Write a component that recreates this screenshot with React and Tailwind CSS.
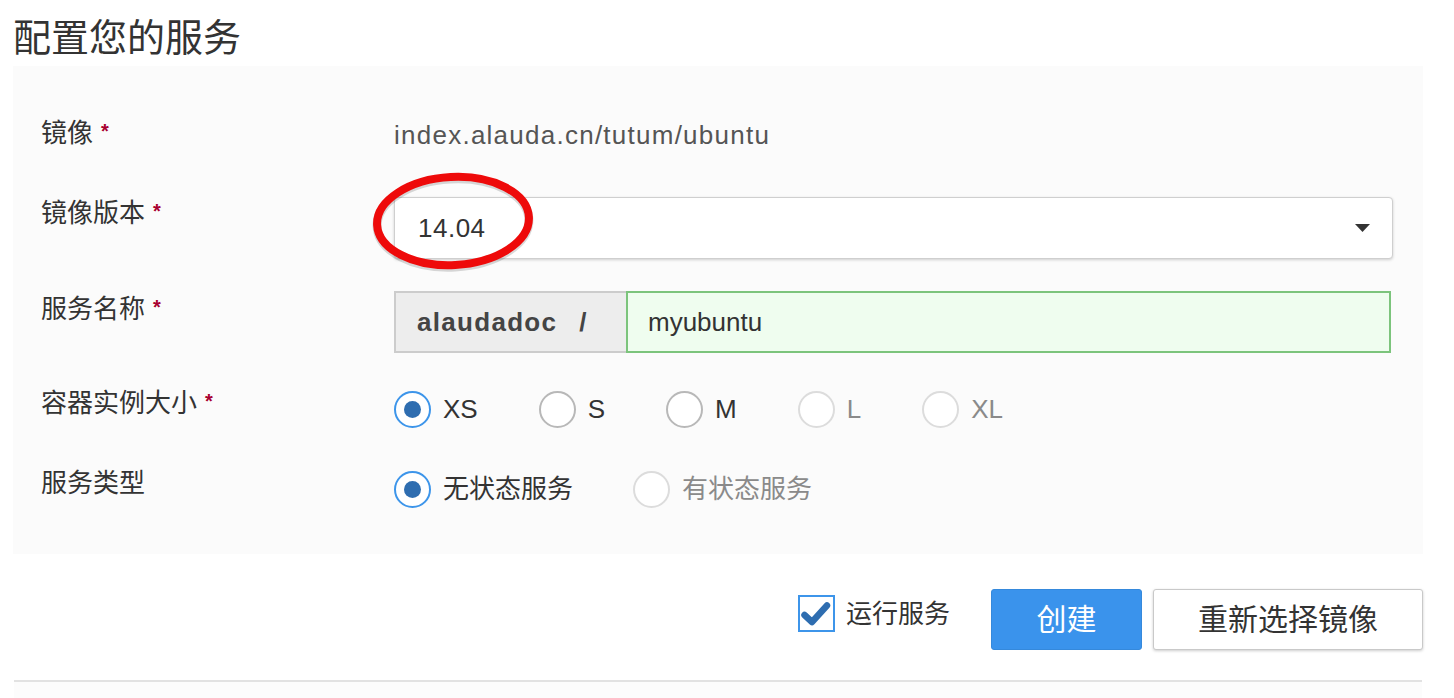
import React, { useState } from 'react';

const font = { fontFamily: '"Liberation Sans", "Noto Sans CJK SC", sans-serif' };

const Star = () => (
  <span className="ml-[8px] text-[20px] font-bold text-[#a8002f] relative top-[-4px]">*</span>
);

const Label = ({ children, required }) => (
  <div className="w-[381px] shrink-0 pl-[28px] text-[26px] leading-[32px] text-[#333]">
    {children}
    {required && <Star />}
  </div>
);

const Radio = ({ label, checked, disabled, onClick }) => (
  <button
    type="button"
    onClick={disabled ? undefined : onClick}
    className="flex items-center gap-[12px]"
  >
    <span
      className={`w-[37px] h-[37px] rounded-full border-2 flex items-center justify-center bg-white ${
        checked ? 'border-[#3d95ea]' : disabled ? 'border-[#dcdcdc]' : 'border-[#b8b8b8]'
      }`}
    >
      {checked && <span className="w-[17px] h-[17px] rounded-full bg-[#2e6db0]"></span>}
    </span>
    <span className={`text-[26px] leading-[32px] ${disabled ? 'text-[#8a8a8a]' : 'text-[#333]'}`}>
      {label}
    </span>
  </button>
);

const App = () => {
  const [size, setSize] = useState('XS');
  const [kind, setKind] = useState('stateless');
  const [run, setRun] = useState(true);
  const [name, setName] = useState('myubuntu');

  const sizes = [
    { id: 'XS' },
    { id: 'S' },
    { id: 'M' },
    { id: 'L', disabled: true },
    { id: 'XL', disabled: true },
  ];

  return (
    <div className="w-[1454px] h-[698px] bg-white pl-[13px] pr-[31px] pt-[19px] relative overflow-hidden" style={font}>
      <h1 className="text-[38px] leading-[38px] text-[#333] font-normal">配置您的服务</h1>

      {/* form panel */}
      <div className="mt-[9px] bg-[#fbfbfb] pt-[51px] pb-[43px]">
        <div className="mr-[30px]">
          {/* 镜像 */}
          <div className="flex items-start">
            <Label required>镜像</Label>
            <div className="text-[26px] leading-[36px] text-[#555] tracking-[1.25px]">index.alauda.cn/tutum/ubuntu</div>
          </div>

          {/* 镜像版本 */}
          <div className="flex items-start mt-[44px]">
            <Label required>镜像版本</Label>
            <div className="flex-1 h-[62px] border border-[#cfcfcf] rounded-[4px] bg-white shadow-[0_1px_3px_rgba(0,0,0,0.18)] flex items-center justify-between pl-[23px] pr-[22px]">
              <span className="text-[26px] text-[#333] tracking-[0.5px]">14.04</span>
              <svg width="15" height="8" viewBox="0 0 15 8">
                <path d="M0 0 L15 0 L7.5 8 Z" fill="#333" />
              </svg>
            </div>
          </div>

          {/* 服务名称 */}
          <div className="flex items-start mt-[32px]">
            <div className="pt-[2px]">
              <Label required>服务名称</Label>
            </div>
            <div className="flex-1 flex h-[62px] mr-[2px]">
              <div className="w-[232px] shrink-0 bg-[#ededed] border-2 border-r-0 border-[#cccccc] flex items-center pl-[21px] text-[26px] font-bold text-[#444] tracking-[1.3px]">
                alaudadoc<span className="ml-[22px]">/</span>
              </div>
              <input
                value={name}
                onChange={(e) => setName(e.target.value)}
                className="flex-1 bg-[#effdef] border-2 border-[#7cc47c] pl-[20px] text-[26px] text-[#333] outline-none"
                style={font}
              />
            </div>
          </div>

          {/* 容器实例大小 */}
          <div className="flex items-start mt-[34px]">
            <Label required>容器实例大小</Label>
            <div className="h-[44px] flex items-center gap-[61px]">
              {sizes.map((s) => (
                <Radio
                  key={s.id}
                  label={s.id}
                  checked={size === s.id}
                  disabled={s.disabled}
                  onClick={() => setSize(s.id)}
                />
              ))}
            </div>
          </div>

          {/* 服务类型 */}
          <div className="flex items-start mt-[36px]">
            <Label>服务类型</Label>
            <div className="h-[44px] flex items-center gap-[60px]">
              <Radio label="无状态服务" checked={kind === 'stateless'} onClick={() => setKind('stateless')} />
              <Radio label="有状态服务" checked={kind === 'stateful'} disabled />
            </div>
          </div>
        </div>
      </div>

      {/* Actions */}
      <div className="flex justify-end items-start mt-[35px]">
        <button type="button" onClick={() => setRun(!run)} className="flex items-center mt-[6px] mr-[41px]">
          <span className="w-[37px] h-[37px] border-2 border-[#3d95ea] bg-white flex items-center justify-center">
            {run && (
              <svg width="30" height="26" viewBox="0 0 30 26">
                <path d="M3.5 14 L11 21 L26 4.5" fill="none" stroke="#2e6db0" strokeWidth="6.5" strokeLinecap="round" strokeLinejoin="round" />
              </svg>
            )}
          </span>
          <span className="ml-[11px] text-[26px] leading-[32px] text-[#333]">运行服务</span>
        </button>
        <button type="button" className="w-[151px] h-[61px] rounded-[3px] bg-[#3a93ec] border border-[#3589dc] text-white text-[30px] flex items-center justify-center">
          创建
        </button>
        <button type="button" className="ml-[11px] w-[270px] h-[61px] rounded-[3px] bg-white border border-[#c9c9c9] shadow-[0_1px_3px_rgba(0,0,0,0.2)] text-[#333] text-[30px] flex items-center justify-center">
          重新选择镜像
        </button>
      </div>

      <div className="mt-[30px] ml-[1px] mr-[1px] h-[2px] bg-[#e2e2e2]"></div>
      <div className="ml-[1px] mr-[1px] h-[20px] bg-[#fcfcfc]"></div>

      {/* annotation */}
      <svg className="absolute left-[368px] top-[168px] pointer-events-none" width="172" height="110" viewBox="0 0 172 110">
        <ellipse cx="85" cy="55" rx="76" ry="44" transform="rotate(-3 85 55)" fill="none" stroke="rgba(0,0,0,0.15)" strokeWidth="9" />
        <ellipse cx="85" cy="53" rx="76" ry="44" transform="rotate(-3 85 53)" fill="none" stroke="#ee0a0a" strokeWidth="8" />
      </svg>
    </div>
  );
};

export default App;
